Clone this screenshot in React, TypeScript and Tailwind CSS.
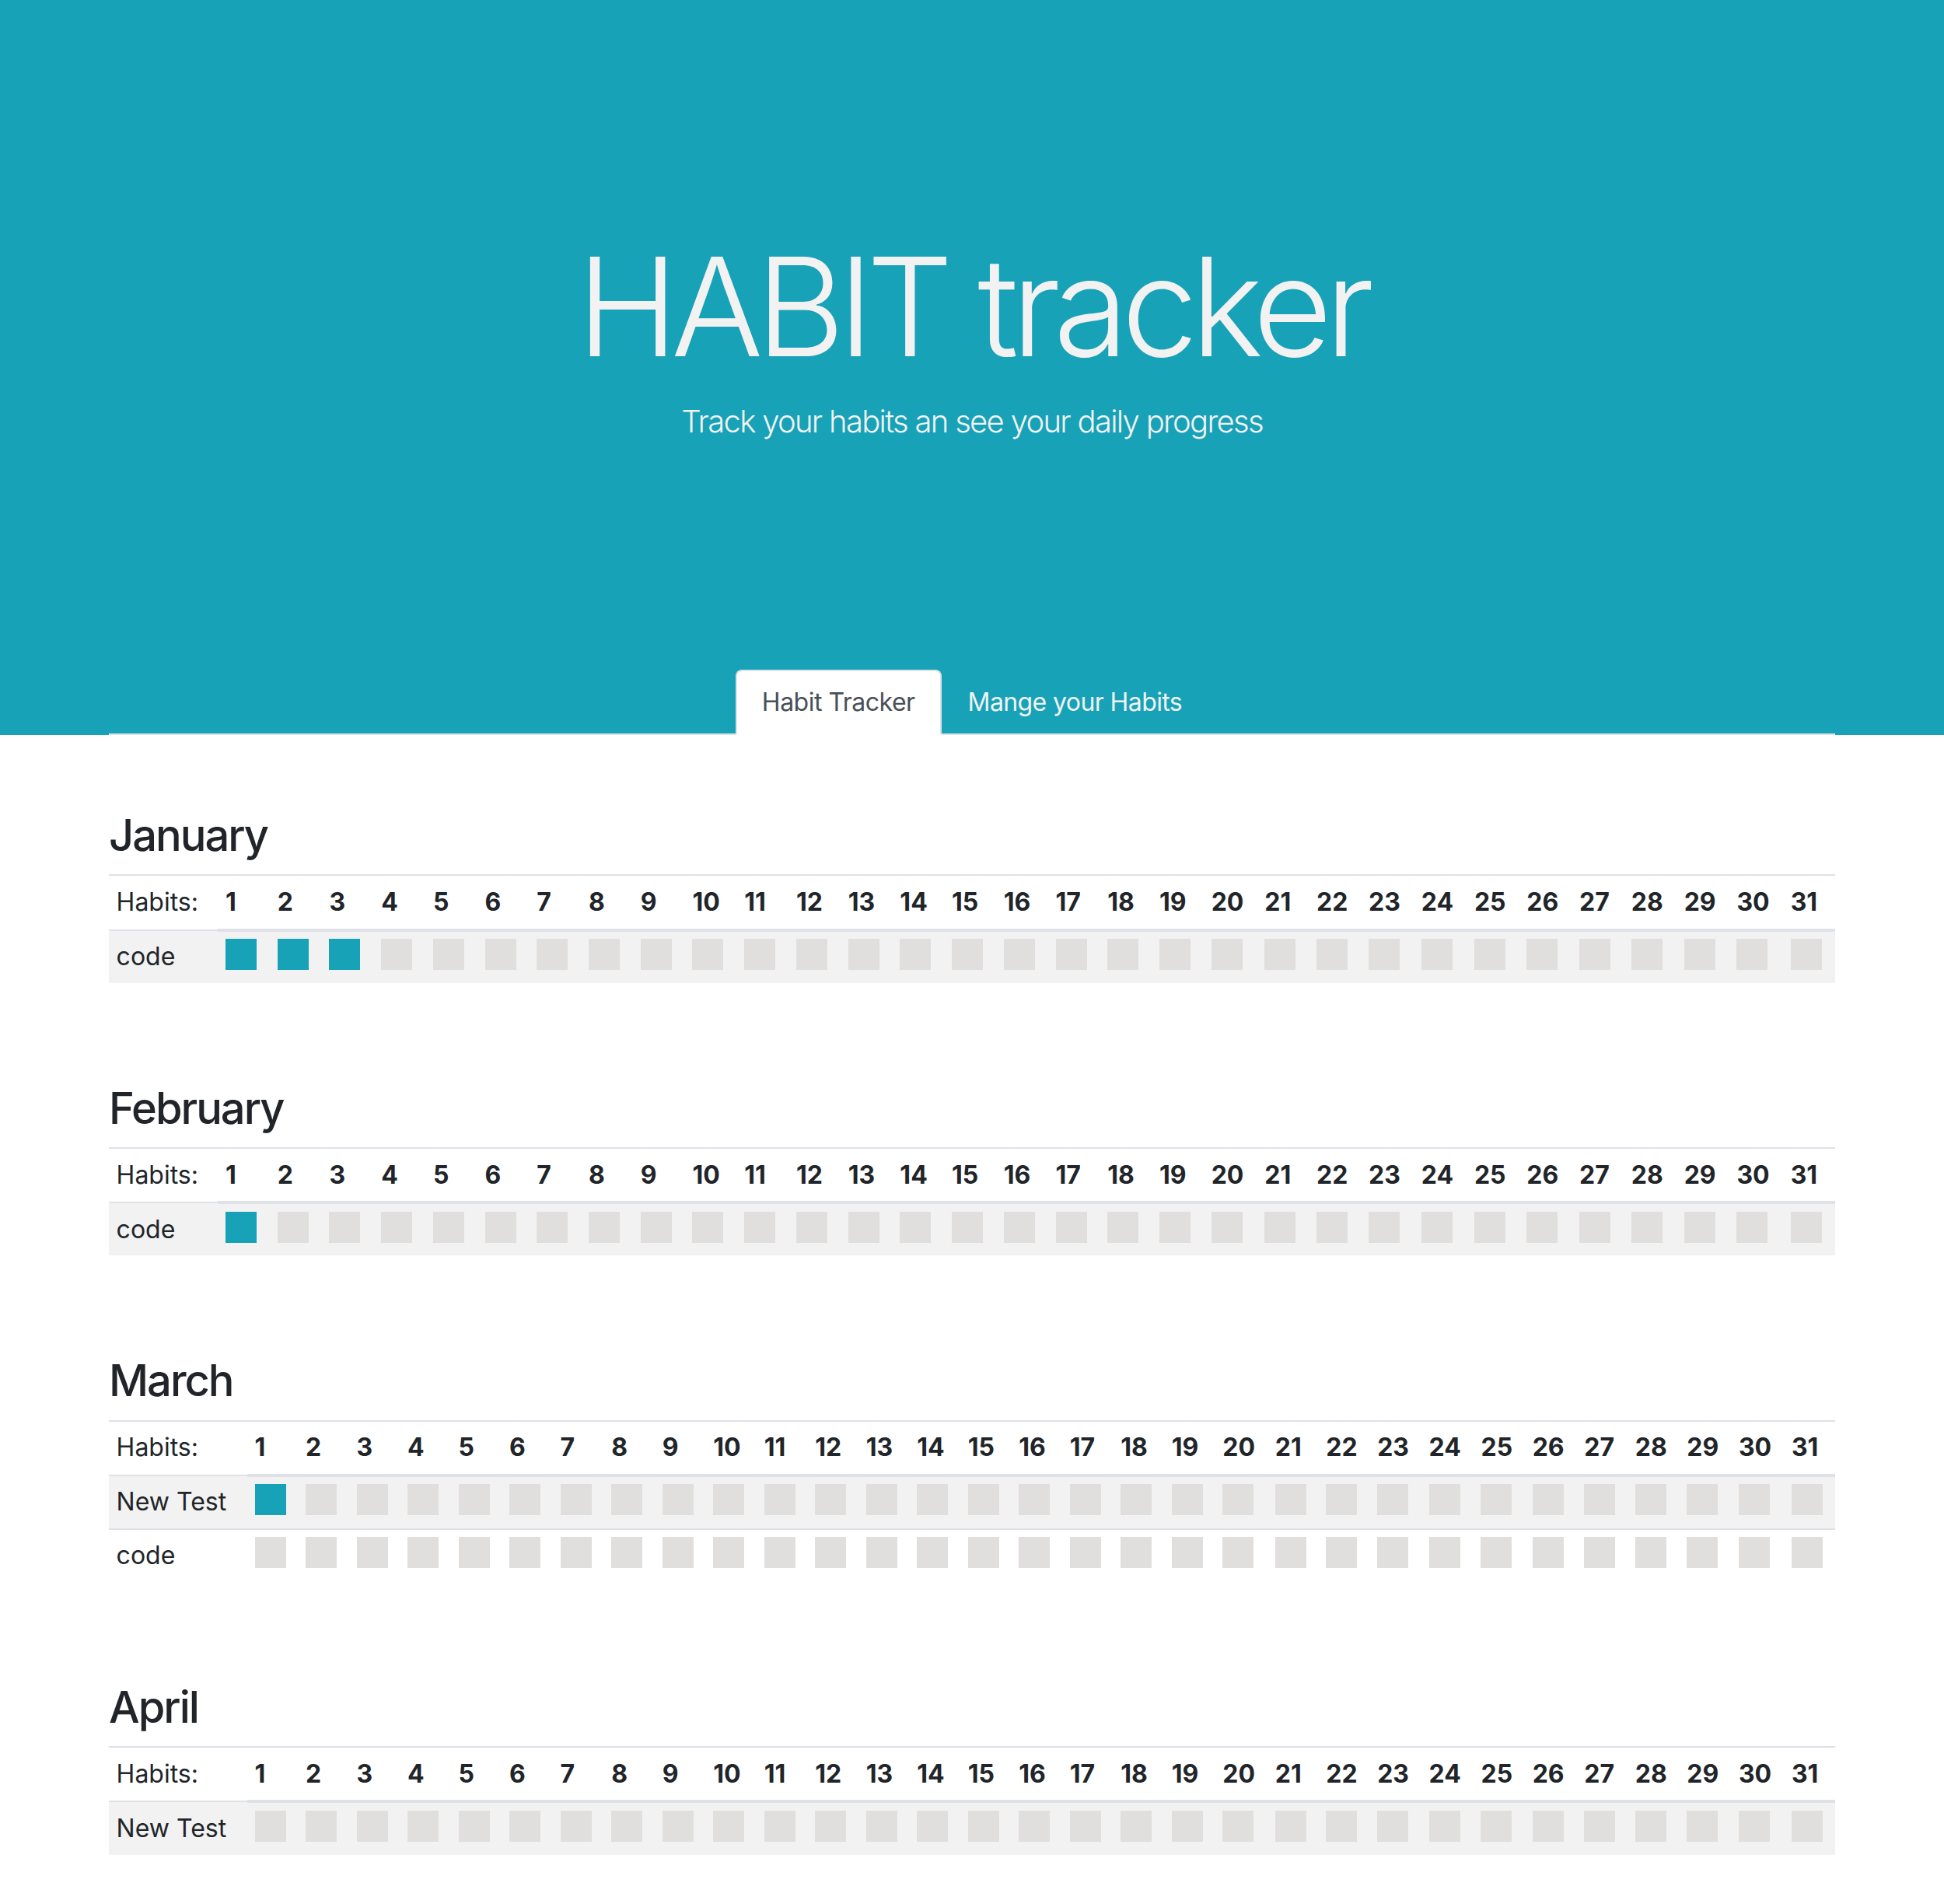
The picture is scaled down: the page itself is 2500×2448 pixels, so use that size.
import React from "react";

type Habit = { name: string; done: number[] };
type Month = { name: string; habits: Habit[] };

const months: Month[] = [
  { name: "January", habits: [{ name: "code", done: [1, 2, 3] }] },
  { name: "February", habits: [{ name: "code", done: [1] }] },
  {
    name: "March",
    habits: [
      { name: "New Test", done: [1] },
      { name: "code", done: [] },
    ],
  },
  { name: "April", habits: [{ name: "New Test", done: [] }] },
];

const days = Array.from({ length: 31 }, (_, i) => i + 1);

function MonthTable({ month }: { month: Month }) {
  return (
    <div className="pt-[96px] pb-[32px]">
      <h3 className="text-[56px] font-medium leading-[1.2] mb-[16px] text-[#212529] tracking-[-2px]">
        {month.name}
      </h3>
      <table className="w-full border-collapse text-[#212529]">
        <thead>
          <tr>
            <th className="p-[9.6px] text-left align-top font-normal border-t-2 border-[#dee2e6] leading-[48px]">
              Habits:
            </th>
            {days.map((d) => (
              <th
                key={d}
                className="p-[9.6px] text-left align-top font-bold border-t-2 border-b-4 border-[#dee2e6] leading-[48px]"
              >
                {d}
              </th>
            ))}
          </tr>
        </thead>
        <tbody>
          {month.habits.map((h, idx) => (
            <tr key={h.name} className={idx % 2 === 0 ? "bg-[#f2f2f2]" : "bg-white"}>
              <td className="p-[9.6px] align-top border-t-2 border-[#dee2e6] leading-[48px] whitespace-nowrap">
                {h.name}
              </td>
              {days.map((d) => (
                <td key={d} className="p-[9.6px] align-top border-t-2 border-[#dee2e6] leading-[48px]">
                  <div
                    className={
                      h.done.includes(d)
                        ? "w-[40px] h-[40px] bg-[#17a2b8]"
                        : "w-[40px] h-[40px] bg-[#e0dfdd]"
                    }
                  />
                </td>
              ))}
            </tr>
          ))}
        </tbody>
      </table>
    </div>
  );
}

export default function App() {
  return (
    <div className="w-full bg-white text-[32px]" style={{ fontFamily: "Inter, 'Noto Sans', sans-serif" }}>
      <header className="w-full bg-[#17a2b8] pt-[288px]">
        <div className="w-[2220px] mx-auto flex flex-col items-center">
          <h1 className="text-[176px] font-light leading-[1.2] text-[#f2f2f2] mb-[13px] tracking-[-9.2px]">
            HABIT tracker
          </h1>
          <p className="text-[40px] font-light leading-[1.5] text-[#f2f2f2] tracking-[-1.7px]">
            Track your habits an see your daily progress
          </p>
          <nav className="w-full mt-[289px] flex justify-center border-b-2 border-[#dee2e6]">
            <div className="-mb-[2px] px-[32px] py-[16px] leading-[48px] bg-white text-[#495057] border-2 border-[#dee2e6] border-b-white rounded-t-[8px] tracking-[-0.5px]">
              Habit Tracker
            </div>
            <div className="-mb-[2px] px-[32px] py-[16px] leading-[48px] text-[#f2f2f2] border-2 border-transparent tracking-[-0.6px]">
              Mange your Habits
            </div>
          </nav>
        </div>
      </header>
      <main className="w-[2220px] mx-auto">
        {months.map((m) => (
          <MonthTable key={m.name} month={m} />
        ))}
      </main>
    </div>
  );
}
